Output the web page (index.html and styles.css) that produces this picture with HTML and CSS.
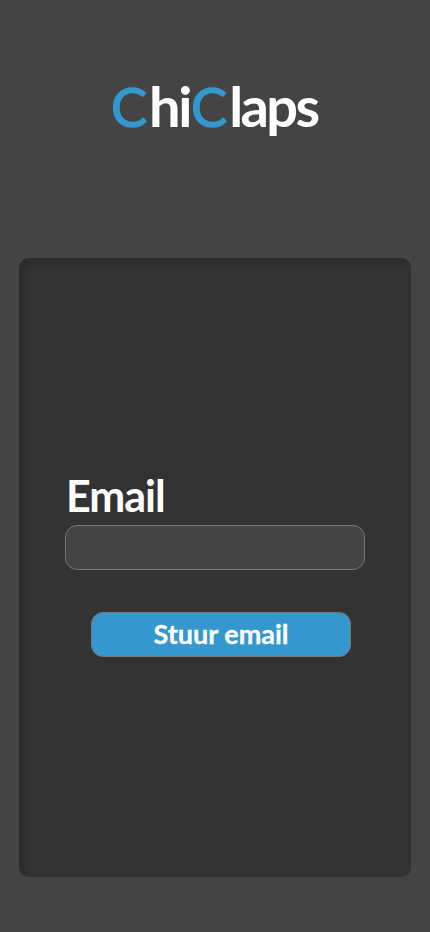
FILE: index.html
```html
<!DOCTYPE html>
<html lang="nl">
<head>
<meta charset="utf-8">
<title>ChiClaps</title>
<link rel="stylesheet" href="styles.css">
</head>
<body>
<header class="header"><h1 class="logo"><span class="accent">C</span><span class="hi">hi</span><span class="accent">C</span><span class="laps">laps</span></h1></header>
<main class="panel">
<form class="form">
<label class="label" for="email">Email</label>
<input class="input" id="email" type="email">
<button class="button" type="button"><span class="button-text">Stuur email</span></button>
</form>
</main>
</body>
</html>
```

FILE: styles.css
```css
* { box-sizing: border-box; }
body { margin: 0; height: 932px; overflow: hidden; background: #444; color: #fff; font-family: Lato, sans-serif; }
.header { height: 258px; padding: 71px 0 0 111px; }
.logo { margin: 0; font-size: 56px; line-height: 70px; font-weight: 700; white-space: nowrap; }
.accent { color: #3498ce; font-size: 54px; font-weight: 400; letter-spacing: 2px; -webkit-text-stroke: 1.5px #3498ce; }
.hi { letter-spacing: -2.4px; margin-right: 1px; }
.laps { letter-spacing: -2.6px; }
.panel { height: 619px; margin: 0 19px; padding: 214px 46px 0; border-radius: 10px; background: #333; box-shadow: inset 5px 5px 7px #2b2b2b; }
.form { display: flex; flex-direction: column; }
.label { height: 53px; padding-left: 1px; line-height: 48px; font-size: 43px; font-weight: 700; letter-spacing: -1px; }
.input { width: 300px; height: 45px; border: 1px solid #777; border-radius: 12px; background: #444; padding: 0 12px; color: #fff; font-size: 24px; }
.button { width: 260px; height: 45px; margin: 42px 0 0 26px; padding: 0 0 2px; border: 1px solid #777; border-radius: 12px; background: #3498ce; color: #fff; font: 700 27px/41px Lato, sans-serif; }
.button-text { display: inline-block; -webkit-text-stroke: 0.3px #fff; }
```
